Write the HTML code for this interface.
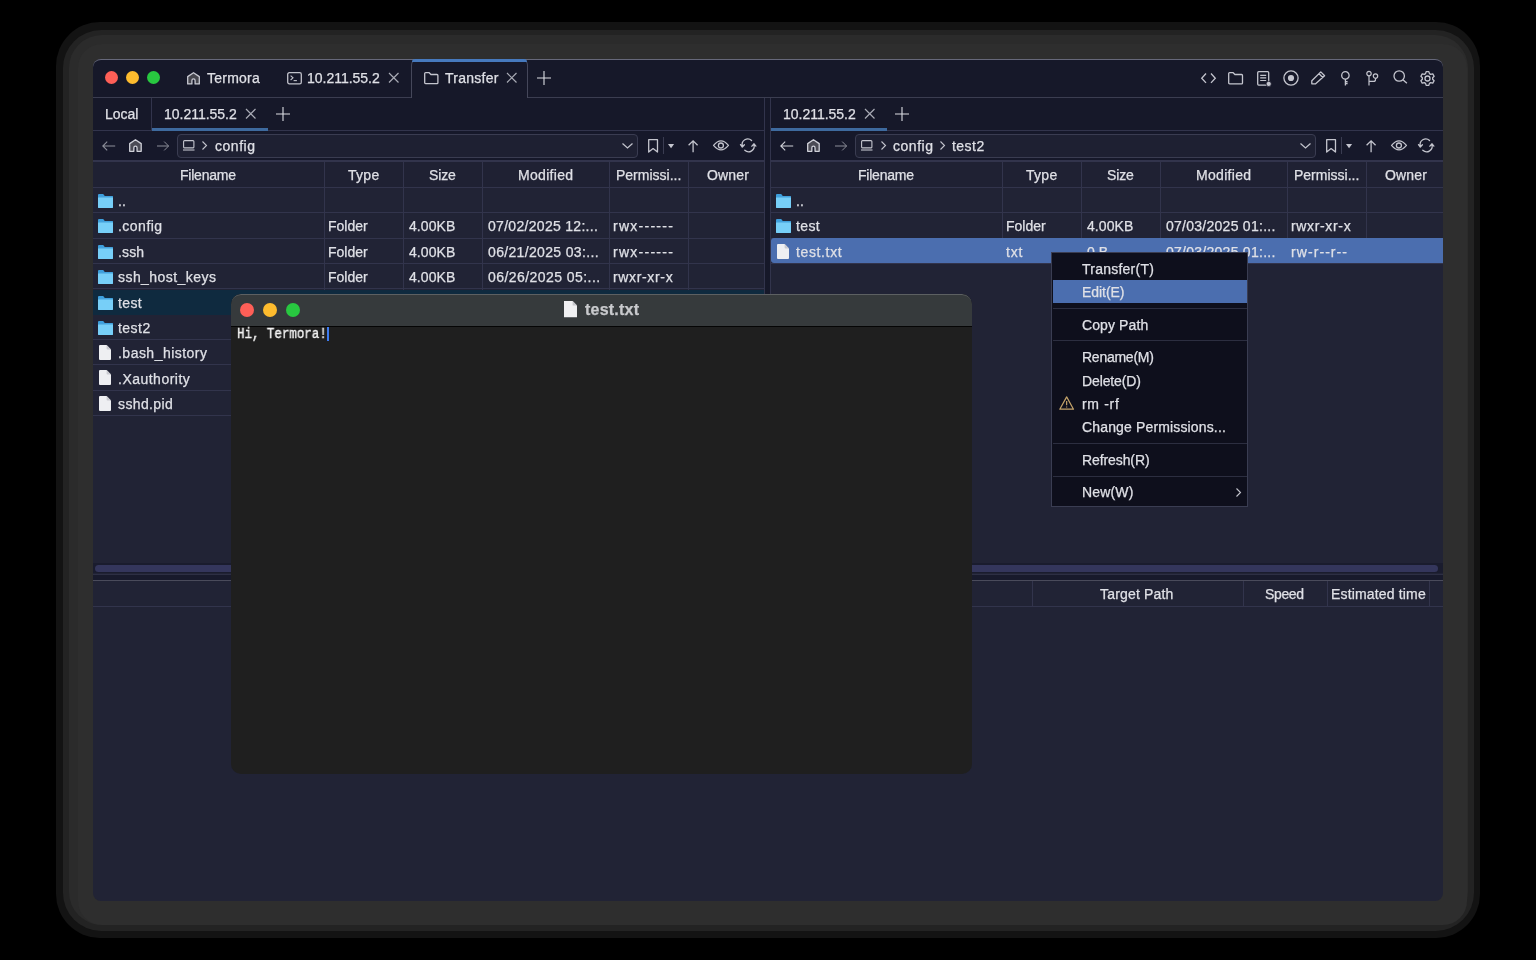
<!DOCTYPE html>
<html><head><meta charset="utf-8"><style>
*{margin:0;padding:0;box-sizing:border-box}
html,body{width:1536px;height:960px;overflow:hidden;background:#000;font-family:"Liberation Sans",sans-serif;color:#dfe0e6}
.a{position:absolute}
.t{position:absolute;white-space:pre;font-size:14px;line-height:20px;will-change:transform;-webkit-text-stroke:0.25px currentColor}
svg{position:absolute;overflow:visible}
</style></head><body>
<div class="a" style="left:56px;top:21.5px;width:1424px;height:916.5px;border-radius:44px;background:#131313"></div>
<div class="a" style="left:63px;top:30px;width:1411px;height:901px;border-radius:38px;background:#232323"></div>
<div class="a" style="left:68.5px;top:35px;width:1399px;height:890px;border-radius:33px;background:#2b2b2b"></div>
<div class="a" style="left:77.7px;top:44px;width:1389.3px;height:881px;border-radius:24px;background:#2e2e2e"></div>
<div class="a" style="left:93px;top:59px;width:1350px;height:842px;border-radius:8px;background:#212335"></div>
<div class="a" style="left:93px;top:59px;width:1350px;height:38px;border-radius:8px 8px 0 0;background:#161829;border-top:1px solid #66687a"></div>
<div class="a" style="left:93px;top:97px;width:1350px;height:1px;background:#3b3d50;"></div>
<div class="a" style="left:105.0px;top:71.3px;width:13px;height:13px;border-radius:50%;background:#fe5f57"></div>
<div class="a" style="left:126.0px;top:71.3px;width:13px;height:13px;border-radius:50%;background:#febc2e"></div>
<div class="a" style="left:147.0px;top:71.3px;width:13px;height:13px;border-radius:50%;background:#28c840"></div>
<svg style="left:187px;top:71.6px" width="13" height="12.6" viewBox="0 0 13 12.6"><path d="M0.7 11.9 V4.6 L6.5 0.7 L12.3 4.6 V11.9 H8.1 V8.399999999999999 A1.6 1.6 0 0 0 4.9 8.399999999999999 V11.9 Z" fill="#46464e" stroke="#c8c9d2" stroke-width="1.3" stroke-linejoin="round"/></svg>
<div class="t" style="top:68.00px;font-size:14px;color:#dfe0e6;font-family:'Liberation Sans',sans-serif;letter-spacing:0.234px;left:207.00px;">Termora</div>
<svg style="left:286.8px;top:71.8px" width="15" height="12.5" viewBox="0 0 15 12.5"><rect x="0.7" y="0.7" width="13.6" height="11.1" rx="1.6" fill="none" stroke="#c0c1ca" stroke-width="1.3"/><path d="M3.6 3.6L6 5.8L3.6 8" fill="none" stroke="#c0c1ca" stroke-width="1.1"/><path d="M6.6 8.6H9.9" stroke="#c0c1ca" stroke-width="1.1"/></svg>
<div class="t" style="top:68.00px;font-size:14px;color:#dfe0e6;font-family:'Liberation Sans',sans-serif;letter-spacing:-0.020px;left:307.00px;">10.211.55.2</div>
<svg style="left:388.55px;top:73.35px" width="9.5" height="9.5" viewBox="0 0 9.5 9.5"><path d="M0 0L9.5 9.5M9.5 0L0 9.5" stroke="#a9abb5" stroke-width="1.2" fill="none"/></svg>
<div class="a" style="left:410.5px;top:59px;width:117px;height:39px;background:#161829;border:1px solid #45475a;border-bottom:none;border-radius:6px 6px 0 0"></div>
<div class="a" style="left:411.5px;top:59px;width:115px;height:3px;background:#4679bd;border-radius:3px 3px 0 0"></div>
<svg style="left:424px;top:71.8px" width="14.6" height="12.3" viewBox="0 0 14.6 12.3"><path d="M0.7 1.6 A0.9 0.9 0 0 1 1.6 0.7 H5.2 L6.9 2.5 H13.0 A0.9 0.9 0 0 1 13.9 3.4 V10.700000000000001 A0.9 0.9 0 0 1 13.0 11.600000000000001 H1.6 A0.9 0.9 0 0 1 0.7 10.700000000000001 Z" fill="none" stroke="#c4c5ce" stroke-width="1.3" stroke-linejoin="round"/></svg>
<div class="t" style="top:68.00px;font-size:14px;color:#dfe0e6;font-family:'Liberation Sans',sans-serif;letter-spacing:0.261px;left:445.00px;">Transfer</div>
<svg style="left:506.55px;top:73.35px" width="9.5" height="9.5" viewBox="0 0 9.5 9.5"><path d="M0 0L9.5 9.5M9.5 0L0 9.5" stroke="#a9abb5" stroke-width="1.2" fill="none"/></svg>
<svg style="left:536.6px;top:70.8px" width="14" height="14" viewBox="0 0 14 14"><path d="M7.0 0V14M0 7.0H14" stroke="#dddee4" stroke-width="1.1" fill="none"/></svg>
<svg style="left:1200.7px;top:72.8px" width="15" height="10.4" viewBox="0 0 15 10.4"><path d="M5 0.5L0.7 5.2L5 9.9M10 0.5L14.3 5.2L10 9.9" fill="none" stroke="#c4c5ce" stroke-width="1.3"/></svg>
<svg style="left:1228px;top:71.8px" width="15.2" height="12.5" viewBox="0 0 15.2 12.5"><path d="M0.7 1.6 A0.9 0.9 0 0 1 1.6 0.7 H5.2 L6.9 2.5 H13.6 A0.9 0.9 0 0 1 14.5 3.4 V10.9 A0.9 0.9 0 0 1 13.6 11.8 H1.6 A0.9 0.9 0 0 1 0.7 10.9 Z" fill="none" stroke="#c4c5ce" stroke-width="1.3" stroke-linejoin="round"/></svg>
<svg style="left:1257px;top:71px" width="14" height="15" viewBox="0 0 14 15"><rect x="0.7" y="0.7" width="11" height="13.4" rx="1" fill="none" stroke="#c4c5ce" stroke-width="1.3"/><path d="M3.2 4.4H9.2M3.2 6.9H9.2M3.2 9.5H9.2" stroke="#c4c5ce" stroke-width="1.1"/><circle cx="11.7" cy="12.9" r="2.6" fill="#c4c5ce" stroke="#161829" stroke-width="0.8"/></svg>
<svg style="left:1282.6px;top:69.8px" width="16" height="16" viewBox="0 0 16 16"><circle cx="8" cy="8" r="7.1" fill="none" stroke="#c4c5ce" stroke-width="1.3"/><circle cx="8" cy="8" r="3.1" fill="#c4c5ce"/></svg>
<svg style="left:1311px;top:71px" width="14.5" height="13.5" viewBox="0 0 14.5 13.5"><path d="M0.8 9.8 L9.8 0.9 L13.6 4.7 L4.6 12.8 H0.8 Z M8 2.7 L11.8 6.5" fill="none" stroke="#c4c5ce" stroke-width="1.3" stroke-linejoin="round"/></svg>
<svg style="left:1340.6px;top:70.6px" width="9" height="15" viewBox="0 0 9 15"><circle cx="4.4" cy="4.4" r="3.7" fill="none" stroke="#c4c5ce" stroke-width="1.3"/><path d="M4.4 8.1V14.4M4.4 10.6H6.6M4.4 12.5H6.6" fill="none" stroke="#c4c5ce" stroke-width="1.3"/></svg>
<svg style="left:1366px;top:70.6px" width="12.5" height="15" viewBox="0 0 12.5 15"><circle cx="3" cy="2.6" r="2.2" fill="none" stroke="#c4c5ce" stroke-width="1.2"/><circle cx="9.5" cy="5.1" r="2.2" fill="none" stroke="#c4c5ce" stroke-width="1.2"/><path d="M3 4.8V14.4M3 10.4H7.5Q9.5 10.4 9.5 8.4V7.3" fill="none" stroke="#c4c5ce" stroke-width="1.2"/></svg>
<svg style="left:1392.6px;top:70.4px" width="15" height="14" viewBox="0 0 15 14"><circle cx="6.2" cy="6" r="5.2" fill="none" stroke="#c4c5ce" stroke-width="1.3"/><path d="M9.9 9.7L13.9 13.3" stroke="#c4c5ce" stroke-width="1.3"/></svg>
<svg style="left:1420.1px;top:70.5px" width="15" height="15" viewBox="0 0 15 15"><path d="M5.55 2.68 L6.16 0.63 L8.84 0.63 L9.45 2.68 L10.70 3.40 L12.78 2.91 L14.12 5.22 L12.65 6.78 L12.65 8.22 L14.12 9.78 L12.78 12.09 L10.70 11.60 L9.45 12.32 L8.84 14.37 L6.16 14.37 L5.55 12.32 L4.30 11.60 L2.22 12.09 L0.88 9.78 L2.35 8.22 L2.35 6.78 L0.88 5.22 L2.22 2.91 L4.30 3.40 Z" fill="none" stroke="#c4c5ce" stroke-width="1.3" stroke-linejoin="round"/><circle cx="7.5" cy="7.5" r="2.5" fill="none" stroke="#c4c5ce" stroke-width="1.3"/></svg>
<div class="a" style="left:93px;top:98px;width:671px;height:32px;background:#161829;"></div>
<div class="a" style="left:93px;top:130px;width:671px;height:1px;background:#32344c;"></div>
<div class="t" style="top:104.00px;font-size:14px;color:#dfe0e6;font-family:'Liberation Sans',sans-serif;letter-spacing:-0.034px;left:104.50px;">Local</div>
<div class="a" style="left:151px;top:98px;width:1px;height:32px;background:#32344c;"></div>
<div class="a" style="left:152px;top:127.7px;width:116px;height:3.2px;background:#3e6a9e;"></div>
<div class="t" style="top:104.00px;font-size:14px;color:#dfe0e6;font-family:'Liberation Sans',sans-serif;letter-spacing:-0.020px;left:164.00px;">10.211.55.2</div>
<svg style="left:245.75px;top:109.45px" width="9.5" height="9.5" viewBox="0 0 9.5 9.5"><path d="M0 0L9.5 9.5M9.5 0L0 9.5" stroke="#a9abb5" stroke-width="1.2" fill="none"/></svg>
<svg style="left:276.0px;top:107.0px" width="14" height="14" viewBox="0 0 14 14"><path d="M7.0 0V14M0 7.0H14" stroke="#dddee4" stroke-width="1.1" fill="none"/></svg>
<div class="a" style="left:93px;top:131px;width:671px;height:29px;background:#16182a;"></div>
<div class="a" style="left:93px;top:160.2px;width:671px;height:2px;background:#32344c;"></div>
<svg style="left:102px;top:140.6px" width="13.2" height="10" viewBox="0 0 13.2 10"><path d="M13.2 5H0.8M5.2 0.6L0.8 5L5.2 9.4" fill="none" stroke="#8d8f9a" stroke-width="1.1"/></svg>
<svg style="left:129.2px;top:139px" width="12.9" height="13" viewBox="0 0 12.9 13"><path d="M0.7 12.3 V4.6 L6.45 0.7 L12.200000000000001 4.6 V12.3 H8.05 V8.8 A1.6 1.6 0 0 0 4.85 8.8 V12.3 Z" fill="#4b4b55" stroke="#d0d1d9" stroke-width="1.3" stroke-linejoin="round"/></svg>
<svg style="left:157px;top:140.6px" width="12.4" height="10" viewBox="0 0 12.4 10"><path d="M0 5H11.6M7.2 0.6L11.6 5L7.2 9.4" fill="none" stroke="#8d8f9a" stroke-width="1.0"/></svg>
<div class="a" style="left:177.4px;top:133.6px;width:461.1px;height:24px;border:1px solid #3a3c51;border-radius:4px;background:#1e2032"></div>
<svg style="left:182.7px;top:140.2px" width="11.5" height="10.5" viewBox="0 0 11.5 10.5"><rect x="0.6" y="0.6" width="10.3" height="7.3" rx="1" fill="none" stroke="#c4c5ce" stroke-width="1.1"/><path d="M0 10H11.5" stroke="#c4c5ce" stroke-width="1.1"/></svg>
<svg style="left:201.9px;top:141px" width="5" height="9" viewBox="0 0 5 9"><path d="M0.5 0.5L4.5 4.5L0.5 8.5" fill="none" stroke="#c4c5ce" stroke-width="1.1"/></svg>
<div class="t" style="top:136.00px;font-size:14px;color:#dfe0e6;font-family:'Liberation Sans',sans-serif;letter-spacing:0.540px;left:214.50px;">config</div>
<svg style="left:622.2px;top:142.7px" width="11" height="5.6" viewBox="0 0 11 5.6"><path d="M0.5 0.5L5.5 5L10.5 0.5" fill="none" stroke="#c4c5ce" stroke-width="1.2"/></svg>
<svg style="left:647.8px;top:139.1px" width="10.2" height="13.7" viewBox="0 0 10.2 13.7"><path d="M0.7 0.7H9.5V13L5.1 9.6L0.7 13Z" fill="none" stroke="#c4c5ce" stroke-width="1.3" stroke-linejoin="round"/></svg>
<div class="a" style="left:663px;top:136.6px;width:1px;height:17.7px;background:#3a3c51;"></div>
<svg style="left:667.9px;top:144px" width="6.1" height="4.3" viewBox="0 0 6.1 4.3"><path d="M0 0H6.1L3.05 4.3Z" fill="#c4c5ce"/></svg>
<svg style="left:688px;top:139.6px" width="10.2" height="12.2" viewBox="0 0 10.2 12.2"><path d="M5.1 12.2V1M0.6 5.2L5.1 0.8L9.6 5.2" fill="none" stroke="#c4c5ce" stroke-width="1.3"/></svg>
<svg style="left:712.6px;top:140.1px" width="16" height="10.7" viewBox="0 0 16 10.7"><path d="M0.5 5.4Q8 -3.6 15.5 5.4Q8 14.4 0.5 5.4Z" fill="none" stroke="#c4c5ce" stroke-width="1.2" stroke-linejoin="round"/><circle cx="7.9" cy="5.5" r="2.5" fill="none" stroke="#c4c5ce" stroke-width="1.3"/></svg>
<svg style="left:739.8px;top:139.1px" width="16.4" height="12.7" viewBox="0 0 16.4 12.7"><path d="M11.6 1.5A5.6 5.6 0 0 0 2.4 7.2M0.5 5.6L2.3 8L4.4 5.7M4.8 11.3A5.6 5.6 0 0 0 13.9 5.4M11.9 7.2L13.9 4.8L15.9 7.1" fill="none" stroke="#c4c5ce" stroke-width="1.3" stroke-linejoin="round" stroke-linecap="round"/></svg>
<div class="a" style="left:93px;top:162.2px;width:671px;height:24.6px;background:#1f2133;"></div>
<div class="a" style="left:93px;top:186.8px;width:671px;height:1px;background:#32344c;"></div>
<div class="t" style="top:164.90px;font-size:14px;color:#dfe0e6;font-family:'Liberation Sans',sans-serif;letter-spacing:-0.224px;left:180.45px;">Filename</div>
<div class="t" style="top:164.90px;font-size:14px;color:#dfe0e6;font-family:'Liberation Sans',sans-serif;letter-spacing:0.285px;left:347.55px;">Type</div>
<div class="t" style="top:164.90px;font-size:14px;color:#dfe0e6;font-family:'Liberation Sans',sans-serif;letter-spacing:-0.159px;left:428.95px;">Size</div>
<div class="t" style="top:164.90px;font-size:14px;color:#dfe0e6;font-family:'Liberation Sans',sans-serif;letter-spacing:0.297px;left:517.60px;">Modified</div>
<div class="t" style="top:164.90px;font-size:14px;color:#dfe0e6;font-family:'Liberation Sans',sans-serif;left:615.90px;">Permissi...</div>
<div class="t" style="top:164.90px;font-size:14px;color:#dfe0e6;font-family:'Liberation Sans',sans-serif;letter-spacing:0.173px;left:706.55px;">Owner</div>
<div class="a" style="left:323.7px;top:161px;width:1px;height:254.92px;background:#32344c;"></div>
<div class="a" style="left:402.9px;top:161px;width:1px;height:254.92px;background:#32344c;"></div>
<div class="a" style="left:481.6px;top:161px;width:1px;height:254.92px;background:#32344c;"></div>
<div class="a" style="left:608.9px;top:161px;width:1px;height:254.92px;background:#32344c;"></div>
<div class="a" style="left:688.2px;top:161px;width:1px;height:254.92px;background:#32344c;"></div>
<div class="a" style="left:93px;top:212.18px;width:671px;height:1px;background:#32344c;"></div>
<svg style="left:97.8px;top:194.09px" width="15" height="14" viewBox="0 0 15 14"><path d="M0 1 Q0 0 1 0 H5.2 L6.8 2 H14 Q15 2 15 3 V13 Q15 14 14 14 H1 Q0 14 0 13Z" fill="#3d9fdd"/><rect x="0" y="2.4" width="15" height="11.6" rx="0.8" fill="#77cff8"/><rect x="0" y="2.4" width="15" height="1" fill="#3593d2"/></svg>
<div class="t" style="top:191.09px;font-size:14px;color:#dfe0e6;font-family:'Liberation Sans',sans-serif;left:117.50px;">..</div>
<div class="a" style="left:93px;top:237.56px;width:671px;height:1px;background:#32344c;"></div>
<svg style="left:97.8px;top:219.47px" width="15" height="14" viewBox="0 0 15 14"><path d="M0 1 Q0 0 1 0 H5.2 L6.8 2 H14 Q15 2 15 3 V13 Q15 14 14 14 H1 Q0 14 0 13Z" fill="#3d9fdd"/><rect x="0" y="2.4" width="15" height="11.6" rx="0.8" fill="#77cff8"/><rect x="0" y="2.4" width="15" height="1" fill="#3593d2"/></svg>
<div class="t" style="top:216.47px;font-size:14px;color:#dfe0e6;font-family:'Liberation Sans',sans-serif;letter-spacing:0.479px;left:117.50px;">.config</div>
<div class="t" style="top:216.47px;font-size:14px;color:#dfe0e6;font-family:'Liberation Sans',sans-serif;letter-spacing:-0.015px;left:328.30px;">Folder</div>
<div class="t" style="top:216.47px;font-size:14px;color:#dfe0e6;font-family:'Liberation Sans',sans-serif;letter-spacing:0.077px;left:408.90px;">4.00KB</div>
<div class="t" style="top:216.47px;font-size:14px;color:#dfe0e6;font-family:'Liberation Sans',sans-serif;letter-spacing:0.300px;left:487.60px;">07/02/2025 12:...</div>
<div class="t" style="top:216.47px;font-size:14px;color:#dfe0e6;font-family:'Liberation Sans',sans-serif;letter-spacing:1.261px;left:613.40px;">rwx------</div>
<div class="a" style="left:93px;top:262.94px;width:671px;height:1px;background:#32344c;"></div>
<svg style="left:97.8px;top:244.85px" width="15" height="14" viewBox="0 0 15 14"><path d="M0 1 Q0 0 1 0 H5.2 L6.8 2 H14 Q15 2 15 3 V13 Q15 14 14 14 H1 Q0 14 0 13Z" fill="#3d9fdd"/><rect x="0" y="2.4" width="15" height="11.6" rx="0.8" fill="#77cff8"/><rect x="0" y="2.4" width="15" height="1" fill="#3593d2"/></svg>
<div class="t" style="top:241.85px;font-size:14px;color:#dfe0e6;font-family:'Liberation Sans',sans-serif;letter-spacing:0.153px;left:117.50px;">.ssh</div>
<div class="t" style="top:241.85px;font-size:14px;color:#dfe0e6;font-family:'Liberation Sans',sans-serif;letter-spacing:-0.015px;left:328.30px;">Folder</div>
<div class="t" style="top:241.85px;font-size:14px;color:#dfe0e6;font-family:'Liberation Sans',sans-serif;letter-spacing:0.077px;left:408.90px;">4.00KB</div>
<div class="t" style="top:241.85px;font-size:14px;color:#dfe0e6;font-family:'Liberation Sans',sans-serif;letter-spacing:0.342px;left:487.60px;">06/21/2025 03:...</div>
<div class="t" style="top:241.85px;font-size:14px;color:#dfe0e6;font-family:'Liberation Sans',sans-serif;letter-spacing:1.261px;left:613.40px;">rwx------</div>
<div class="a" style="left:93px;top:288.32px;width:671px;height:1px;background:#32344c;"></div>
<svg style="left:97.8px;top:270.23px" width="15" height="14" viewBox="0 0 15 14"><path d="M0 1 Q0 0 1 0 H5.2 L6.8 2 H14 Q15 2 15 3 V13 Q15 14 14 14 H1 Q0 14 0 13Z" fill="#3d9fdd"/><rect x="0" y="2.4" width="15" height="11.6" rx="0.8" fill="#77cff8"/><rect x="0" y="2.4" width="15" height="1" fill="#3593d2"/></svg>
<div class="t" style="top:267.23px;font-size:14px;color:#dfe0e6;font-family:'Liberation Sans',sans-serif;letter-spacing:0.445px;left:117.50px;">ssh_host_keys</div>
<div class="t" style="top:267.23px;font-size:14px;color:#dfe0e6;font-family:'Liberation Sans',sans-serif;letter-spacing:-0.015px;left:328.30px;">Folder</div>
<div class="t" style="top:267.23px;font-size:14px;color:#dfe0e6;font-family:'Liberation Sans',sans-serif;letter-spacing:0.077px;left:408.90px;">4.00KB</div>
<div class="t" style="top:267.23px;font-size:14px;color:#dfe0e6;font-family:'Liberation Sans',sans-serif;letter-spacing:0.442px;left:487.60px;">06/26/2025 05:...</div>
<div class="t" style="top:267.23px;font-size:14px;color:#dfe0e6;font-family:'Liberation Sans',sans-serif;letter-spacing:0.653px;left:613.40px;">rwxr-xr-x</div>
<div class="a" style="left:93px;top:313.7px;width:671px;height:1px;background:#32344c;"></div>
<div class="a" style="left:93px;top:289.62px;width:671px;height:25.08px;background:#0f2a3f;"></div>
<svg style="left:97.8px;top:295.61px" width="15" height="14" viewBox="0 0 15 14"><path d="M0 1 Q0 0 1 0 H5.2 L6.8 2 H14 Q15 2 15 3 V13 Q15 14 14 14 H1 Q0 14 0 13Z" fill="#3d9fdd"/><rect x="0" y="2.4" width="15" height="11.6" rx="0.8" fill="#77cff8"/><rect x="0" y="2.4" width="15" height="1" fill="#3593d2"/></svg>
<div class="t" style="top:292.61px;font-size:14px;color:#dfe0e6;font-family:'Liberation Sans',sans-serif;letter-spacing:0.380px;left:117.50px;">test</div>
<div class="a" style="left:93px;top:339.08px;width:671px;height:1px;background:#32344c;"></div>
<svg style="left:97.8px;top:320.99px" width="15" height="14" viewBox="0 0 15 14"><path d="M0 1 Q0 0 1 0 H5.2 L6.8 2 H14 Q15 2 15 3 V13 Q15 14 14 14 H1 Q0 14 0 13Z" fill="#3d9fdd"/><rect x="0" y="2.4" width="15" height="11.6" rx="0.8" fill="#77cff8"/><rect x="0" y="2.4" width="15" height="1" fill="#3593d2"/></svg>
<div class="t" style="top:317.99px;font-size:14px;color:#dfe0e6;font-family:'Liberation Sans',sans-serif;letter-spacing:0.468px;left:117.50px;">test2</div>
<div class="a" style="left:93px;top:364.46000000000004px;width:671px;height:1px;background:#32344c;"></div>
<svg style="left:99.2px;top:345.07000000000005px" width="12" height="15" viewBox="0 0 12 15"><path d="M1 0 H7.6 L12 4.4 V14 Q12 15 11 15 H1 Q0 15 0 14 V1 Q0 0 1 0Z" fill="#eeeff2"/><path d="M7.6 0 V3.4 Q7.6 4.4 8.6 4.4 H12" fill="#c9cad0"/></svg>
<div class="t" style="top:343.37px;font-size:14px;color:#dfe0e6;font-family:'Liberation Sans',sans-serif;letter-spacing:0.478px;left:117.50px;">.bash_history</div>
<div class="a" style="left:93px;top:389.84000000000003px;width:671px;height:1px;background:#32344c;"></div>
<svg style="left:99.2px;top:370.45000000000005px" width="12" height="15" viewBox="0 0 12 15"><path d="M1 0 H7.6 L12 4.4 V14 Q12 15 11 15 H1 Q0 15 0 14 V1 Q0 0 1 0Z" fill="#eeeff2"/><path d="M7.6 0 V3.4 Q7.6 4.4 8.6 4.4 H12" fill="#c9cad0"/></svg>
<div class="t" style="top:368.75px;font-size:14px;color:#dfe0e6;font-family:'Liberation Sans',sans-serif;letter-spacing:0.487px;left:117.50px;">.Xauthority</div>
<div class="a" style="left:93px;top:415.22px;width:671px;height:1px;background:#32344c;"></div>
<svg style="left:99.2px;top:395.83000000000004px" width="12" height="15" viewBox="0 0 12 15"><path d="M1 0 H7.6 L12 4.4 V14 Q12 15 11 15 H1 Q0 15 0 14 V1 Q0 0 1 0Z" fill="#eeeff2"/><path d="M7.6 0 V3.4 Q7.6 4.4 8.6 4.4 H12" fill="#c9cad0"/></svg>
<div class="t" style="top:394.13px;font-size:14px;color:#dfe0e6;font-family:'Liberation Sans',sans-serif;letter-spacing:0.380px;left:117.50px;">sshd.pid</div>
<div class="a" style="left:771px;top:98px;width:672px;height:32px;background:#161829;"></div>
<div class="a" style="left:771px;top:130px;width:672px;height:1px;background:#32344c;"></div>
<div class="a" style="left:771px;top:127.7px;width:116px;height:3.2px;background:#3e6a9e;"></div>
<div class="t" style="top:104.00px;font-size:14px;color:#dfe0e6;font-family:'Liberation Sans',sans-serif;letter-spacing:-0.020px;left:783.00px;">10.211.55.2</div>
<svg style="left:864.75px;top:109.45px" width="9.5" height="9.5" viewBox="0 0 9.5 9.5"><path d="M0 0L9.5 9.5M9.5 0L0 9.5" stroke="#a9abb5" stroke-width="1.2" fill="none"/></svg>
<svg style="left:895.0px;top:107.0px" width="14" height="14" viewBox="0 0 14 14"><path d="M7.0 0V14M0 7.0H14" stroke="#dddee4" stroke-width="1.1" fill="none"/></svg>
<div class="a" style="left:771px;top:131px;width:672px;height:29px;background:#16182a;"></div>
<div class="a" style="left:771px;top:160.2px;width:672px;height:2px;background:#32344c;"></div>
<svg style="left:780px;top:140.6px" width="13.2" height="10" viewBox="0 0 13.2 10"><path d="M13.2 5H0.8M5.2 0.6L0.8 5L5.2 9.4" fill="none" stroke="#d0d1d8" stroke-width="1.1"/></svg>
<svg style="left:807.2px;top:139px" width="12.9" height="13" viewBox="0 0 12.9 13"><path d="M0.7 12.3 V4.6 L6.45 0.7 L12.200000000000001 4.6 V12.3 H8.05 V8.8 A1.6 1.6 0 0 0 4.85 8.8 V12.3 Z" fill="#4b4b55" stroke="#d0d1d9" stroke-width="1.3" stroke-linejoin="round"/></svg>
<svg style="left:835px;top:140.6px" width="12.4" height="10" viewBox="0 0 12.4 10"><path d="M0 5H11.6M7.2 0.6L11.6 5L7.2 9.4" fill="none" stroke="#8d8f9a" stroke-width="1.0"/></svg>
<div class="a" style="left:855.4px;top:133.6px;width:461.1px;height:24px;border:1px solid #3a3c51;border-radius:4px;background:#1e2032"></div>
<svg style="left:860.7px;top:140.2px" width="11.5" height="10.5" viewBox="0 0 11.5 10.5"><rect x="0.6" y="0.6" width="10.3" height="7.3" rx="1" fill="none" stroke="#c4c5ce" stroke-width="1.1"/><path d="M0 10H11.5" stroke="#c4c5ce" stroke-width="1.1"/></svg>
<svg style="left:880.7px;top:141px" width="5" height="9" viewBox="0 0 5 9"><path d="M0.5 0.5L4.5 4.5L0.5 8.5" fill="none" stroke="#c4c5ce" stroke-width="1.1"/></svg>
<div class="t" style="top:136.00px;font-size:14px;color:#dfe0e6;font-family:'Liberation Sans',sans-serif;letter-spacing:0.540px;left:892.80px;">config</div>
<svg style="left:939.7px;top:141px" width="5" height="9" viewBox="0 0 5 9"><path d="M0.5 0.5L4.5 4.5L0.5 8.5" fill="none" stroke="#c4c5ce" stroke-width="1.1"/></svg>
<div class="t" style="top:136.00px;font-size:14px;color:#dfe0e6;font-family:'Liberation Sans',sans-serif;letter-spacing:0.468px;left:952.30px;">test2</div>
<svg style="left:1300.2px;top:142.7px" width="11" height="5.6" viewBox="0 0 11 5.6"><path d="M0.5 0.5L5.5 5L10.5 0.5" fill="none" stroke="#c4c5ce" stroke-width="1.2"/></svg>
<svg style="left:1325.8px;top:139.1px" width="10.2" height="13.7" viewBox="0 0 10.2 13.7"><path d="M0.7 0.7H9.5V13L5.1 9.6L0.7 13Z" fill="none" stroke="#c4c5ce" stroke-width="1.3" stroke-linejoin="round"/></svg>
<div class="a" style="left:1341px;top:136.6px;width:1px;height:17.7px;background:#3a3c51;"></div>
<svg style="left:1345.9px;top:144px" width="6.1" height="4.3" viewBox="0 0 6.1 4.3"><path d="M0 0H6.1L3.05 4.3Z" fill="#c4c5ce"/></svg>
<svg style="left:1366px;top:139.6px" width="10.2" height="12.2" viewBox="0 0 10.2 12.2"><path d="M5.1 12.2V1M0.6 5.2L5.1 0.8L9.6 5.2" fill="none" stroke="#c4c5ce" stroke-width="1.3"/></svg>
<svg style="left:1390.6px;top:140.1px" width="16" height="10.7" viewBox="0 0 16 10.7"><path d="M0.5 5.4Q8 -3.6 15.5 5.4Q8 14.4 0.5 5.4Z" fill="none" stroke="#c4c5ce" stroke-width="1.2" stroke-linejoin="round"/><circle cx="7.9" cy="5.5" r="2.5" fill="none" stroke="#c4c5ce" stroke-width="1.3"/></svg>
<svg style="left:1417.8px;top:139.1px" width="16.4" height="12.7" viewBox="0 0 16.4 12.7"><path d="M11.6 1.5A5.6 5.6 0 0 0 2.4 7.2M0.5 5.6L2.3 8L4.4 5.7M4.8 11.3A5.6 5.6 0 0 0 13.9 5.4M11.9 7.2L13.9 4.8L15.9 7.1" fill="none" stroke="#c4c5ce" stroke-width="1.3" stroke-linejoin="round" stroke-linecap="round"/></svg>
<div class="a" style="left:771px;top:162.2px;width:672px;height:24.6px;background:#1f2133;"></div>
<div class="a" style="left:771px;top:186.8px;width:672px;height:1px;background:#32344c;"></div>
<div class="t" style="top:164.90px;font-size:14px;color:#dfe0e6;font-family:'Liberation Sans',sans-serif;letter-spacing:-0.224px;left:858.45px;">Filename</div>
<div class="t" style="top:164.90px;font-size:14px;color:#dfe0e6;font-family:'Liberation Sans',sans-serif;letter-spacing:0.285px;left:1025.55px;">Type</div>
<div class="t" style="top:164.90px;font-size:14px;color:#dfe0e6;font-family:'Liberation Sans',sans-serif;letter-spacing:-0.159px;left:1106.95px;">Size</div>
<div class="t" style="top:164.90px;font-size:14px;color:#dfe0e6;font-family:'Liberation Sans',sans-serif;letter-spacing:0.297px;left:1195.60px;">Modified</div>
<div class="t" style="top:164.90px;font-size:14px;color:#dfe0e6;font-family:'Liberation Sans',sans-serif;left:1293.90px;">Permissi...</div>
<div class="t" style="top:164.90px;font-size:14px;color:#dfe0e6;font-family:'Liberation Sans',sans-serif;letter-spacing:0.173px;left:1385.05px;">Owner</div>
<div class="a" style="left:1001.7px;top:161px;width:1px;height:102.64px;background:#32344c;"></div>
<div class="a" style="left:1080.9px;top:161px;width:1px;height:102.64px;background:#32344c;"></div>
<div class="a" style="left:1159.6px;top:161px;width:1px;height:102.64px;background:#32344c;"></div>
<div class="a" style="left:1286.9px;top:161px;width:1px;height:102.64px;background:#32344c;"></div>
<div class="a" style="left:1366.2px;top:161px;width:1px;height:102.64px;background:#32344c;"></div>
<div class="a" style="left:771px;top:212.18px;width:672px;height:1px;background:#32344c;"></div>
<svg style="left:775.8px;top:194.09px" width="15" height="14" viewBox="0 0 15 14"><path d="M0 1 Q0 0 1 0 H5.2 L6.8 2 H14 Q15 2 15 3 V13 Q15 14 14 14 H1 Q0 14 0 13Z" fill="#3d9fdd"/><rect x="0" y="2.4" width="15" height="11.6" rx="0.8" fill="#77cff8"/><rect x="0" y="2.4" width="15" height="1" fill="#3593d2"/></svg>
<div class="t" style="top:191.09px;font-size:14px;color:#dfe0e6;font-family:'Liberation Sans',sans-serif;left:795.50px;">..</div>
<div class="a" style="left:771px;top:237.56px;width:672px;height:1px;background:#32344c;"></div>
<svg style="left:775.8px;top:219.47px" width="15" height="14" viewBox="0 0 15 14"><path d="M0 1 Q0 0 1 0 H5.2 L6.8 2 H14 Q15 2 15 3 V13 Q15 14 14 14 H1 Q0 14 0 13Z" fill="#3d9fdd"/><rect x="0" y="2.4" width="15" height="11.6" rx="0.8" fill="#77cff8"/><rect x="0" y="2.4" width="15" height="1" fill="#3593d2"/></svg>
<div class="t" style="top:216.47px;font-size:14px;color:#dfe0e6;font-family:'Liberation Sans',sans-serif;letter-spacing:0.380px;left:795.50px;">test</div>
<div class="t" style="top:216.47px;font-size:14px;color:#dfe0e6;font-family:'Liberation Sans',sans-serif;letter-spacing:-0.015px;left:1006.30px;">Folder</div>
<div class="t" style="top:216.47px;font-size:14px;color:#dfe0e6;font-family:'Liberation Sans',sans-serif;letter-spacing:0.077px;left:1086.90px;">4.00KB</div>
<div class="t" style="top:216.47px;font-size:14px;color:#dfe0e6;font-family:'Liberation Sans',sans-serif;letter-spacing:0.265px;left:1165.60px;">07/03/2025 01:...</div>
<div class="t" style="top:216.47px;font-size:14px;color:#dfe0e6;font-family:'Liberation Sans',sans-serif;letter-spacing:0.653px;left:1291.40px;">rwxr-xr-x</div>
<div class="a" style="left:771px;top:262.94px;width:672px;height:1px;background:#32344c;"></div>
<div class="a" style="left:771px;top:237.96px;width:672px;height:25.48px;background:#4b6eaf;border-radius:3px 0 0 3px"></div>
<svg style="left:777.2px;top:243.54999999999998px" width="12" height="15" viewBox="0 0 12 15"><path d="M1 0 H7.6 L12 4.4 V14 Q12 15 11 15 H1 Q0 15 0 14 V1 Q0 0 1 0Z" fill="#eeeff2"/><path d="M7.6 0 V3.4 Q7.6 4.4 8.6 4.4 H12" fill="#c9cad0"/></svg>
<div class="t" style="top:241.85px;font-size:14px;color:#dfe0e6;font-family:'Liberation Sans',sans-serif;letter-spacing:0.633px;left:795.50px;">test.txt</div>
<div class="t" style="top:241.85px;font-size:14px;color:#dfe0e6;font-family:'Liberation Sans',sans-serif;letter-spacing:0.773px;left:1006.30px;">txt</div>
<div class="t" style="top:241.85px;font-size:14px;color:#dfe0e6;font-family:'Liberation Sans',sans-serif;left:1086.90px;">0 B</div>
<div class="t" style="top:241.85px;font-size:14px;color:#dfe0e6;font-family:'Liberation Sans',sans-serif;letter-spacing:0.265px;left:1165.60px;">07/03/2025 01:...</div>
<div class="t" style="top:241.85px;font-size:14px;color:#dfe0e6;font-family:'Liberation Sans',sans-serif;letter-spacing:1.075px;left:1291.40px;">rw-r--r--</div>
<div class="a" style="left:764px;top:98px;width:1px;height:465px;background:#32344c;"></div>
<div class="a" style="left:765px;top:98px;width:5px;height:465px;background:#161829;"></div>
<div class="a" style="left:770px;top:98px;width:1px;height:465px;background:#32344c;"></div>
<div class="a" style="left:93px;top:563px;width:1350px;height:10px;background:#1a1c2e;"></div>
<div class="a" style="left:94.5px;top:565px;width:1343.5px;height:6.5px;border-radius:3.5px;background:#34365c"></div>
<div class="a" style="left:93px;top:573.5px;width:1350px;height:1px;background:#2d2f44;"></div>
<div class="a" style="left:93px;top:574.5px;width:1350px;height:5.5px;background:#181a2c;"></div>
<div class="a" style="left:93px;top:580px;width:1350px;height:1px;background:#4a4b5b;"></div>
<div class="a" style="left:93px;top:581px;width:1350px;height:25px;background:#212335;"></div>
<div class="a" style="left:93px;top:606px;width:1350px;height:1px;background:#32344c;"></div>
<div class="a" style="left:1031.6px;top:581px;width:1px;height:25px;background:#32344c;"></div>
<div class="a" style="left:1242.5px;top:581px;width:1px;height:25px;background:#32344c;"></div>
<div class="a" style="left:1326.9px;top:581px;width:1px;height:25px;background:#32344c;"></div>
<div class="a" style="left:1429.4px;top:581px;width:1px;height:25px;background:#32344c;"></div>
<div class="t" style="top:583.50px;font-size:14px;color:#dfe0e6;font-family:'Liberation Sans',sans-serif;letter-spacing:0.181px;left:1100.20px;">Target Path</div>
<div class="t" style="top:583.50px;font-size:14px;color:#dfe0e6;font-family:'Liberation Sans',sans-serif;letter-spacing:-0.357px;left:1265.35px;">Speed</div>
<div class="t" style="top:583.50px;font-size:14px;color:#dfe0e6;font-family:'Liberation Sans',sans-serif;letter-spacing:0.165px;left:1330.65px;">Estimated time</div>
<div class="a" style="left:231px;top:294.3px;width:741px;height:480px;border-radius:10px;background:#1f1f1f;overflow:hidden"><div class="a" style="left:0;top:0;width:741px;height:32px;background:#363a3c;border-top:1px solid #5d6062;border-radius:10px 10px 0 0"></div><div class="a" style="left:0;top:31.7px;width:741px;height:1.2px;background:#050505"></div></div>
<div class="a" style="left:239.9px;top:302.8px;width:14px;height:14px;border-radius:50%;background:#fe5f57"></div>
<div class="a" style="left:262.9px;top:302.8px;width:14px;height:14px;border-radius:50%;background:#febc2e"></div>
<div class="a" style="left:285.9px;top:302.8px;width:14px;height:14px;border-radius:50%;background:#28c840"></div>
<svg style="left:564px;top:301px" width="13" height="16.2" viewBox="0 0 13 16.2"><path d="M0 0H8.6L13 4.4V16.2H0Z" fill="#f0f0f2"/><path d="M8.6 0V4.4H13" fill="#c6c7cc"/></svg>
<div class="t" style="top:300.00px;font-size:16px;color:#c9cacd;font-family:'Liberation Sans',sans-serif;font-weight:bold;letter-spacing:0.218px;left:584.80px;">test.txt</div>
<div class="t" style="top:324.30px;font-size:14px;color:#f2f2f2;font-family:'Liberation Mono',monospace;left:236.60px;transform:scaleX(0.89);transform-origin:0 0;-webkit-text-stroke:0.4px #f2f2f2;">Hi, Termora!</div>
<div class="a" style="left:326.5px;top:326.5px;width:2px;height:14px;background:#3d7bf0;"></div>
<div class="a" style="left:1051px;top:252px;width:196.5px;height:255px;background:#0e0f1c;border:1px solid #3a3d52"></div>
<div class="a" style="left:1052.5px;top:280px;width:194px;height:23px;background:#4b6eaf;"></div>
<div class="a" style="left:1052.5px;top:307.5px;width:194px;height:1px;background:#2c2e40;"></div>
<div class="a" style="left:1052.5px;top:340.3px;width:194px;height:1px;background:#2c2e40;"></div>
<div class="a" style="left:1052.5px;top:443px;width:194px;height:1px;background:#2c2e40;"></div>
<div class="a" style="left:1052.5px;top:475.5px;width:194px;height:1px;background:#2c2e40;"></div>
<div class="t" style="top:258.90px;font-size:14px;color:#dfe0e6;font-family:'Liberation Sans',sans-serif;letter-spacing:0.238px;left:1082.00px;">Transfer(T)</div>
<div class="t" style="top:282.00px;font-size:14px;color:#dfe0e6;font-family:'Liberation Sans',sans-serif;letter-spacing:-0.042px;left:1082.00px;">Edit(E)</div>
<div class="t" style="top:315.20px;font-size:14px;color:#dfe0e6;font-family:'Liberation Sans',sans-serif;letter-spacing:0.103px;left:1082.00px;">Copy Path</div>
<div class="t" style="top:347.30px;font-size:14px;color:#dfe0e6;font-family:'Liberation Sans',sans-serif;letter-spacing:-0.256px;left:1082.00px;">Rename(M)</div>
<div class="t" style="top:370.60px;font-size:14px;color:#dfe0e6;font-family:'Liberation Sans',sans-serif;letter-spacing:-0.123px;left:1082.00px;">Delete(D)</div>
<div class="t" style="top:393.90px;font-size:14px;color:#dfe0e6;font-family:'Liberation Sans',sans-serif;letter-spacing:0.677px;left:1082.00px;">rm -rf</div>
<div class="t" style="top:417.30px;font-size:14px;color:#dfe0e6;font-family:'Liberation Sans',sans-serif;letter-spacing:0.150px;left:1082.00px;">Change Permissions...</div>
<div class="t" style="top:449.80px;font-size:14px;color:#dfe0e6;font-family:'Liberation Sans',sans-serif;letter-spacing:-0.097px;left:1082.00px;">Refresh(R)</div>
<div class="t" style="top:482.30px;font-size:14px;color:#dfe0e6;font-family:'Liberation Sans',sans-serif;letter-spacing:0.176px;left:1082.00px;">New(W)</div>
<svg style="left:1059px;top:396px" width="15.3" height="14" viewBox="0 0 15.3 14"><path d="M7.65 0.9L14.5 13.2H0.8Z" fill="none" stroke="#c5a46a" stroke-width="1.2" stroke-linejoin="round"/><path d="M7.65 5V9.2M7.65 10.6V11.6" stroke="#c5a46a" stroke-width="1.2"/></svg>
<svg style="left:1235.5px;top:487.5px" width="5" height="9" viewBox="0 0 5 9"><path d="M0.5 0.5L4.5 4.5L0.5 8.5" fill="none" stroke="#c4c5ce" stroke-width="1.1"/></svg>
</body></html>
